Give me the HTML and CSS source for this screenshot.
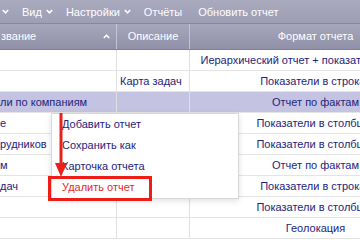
FILE: index.html
```html
<!DOCTYPE html>
<html lang="ru">
<head>
  <meta charset="UTF-8">
  <meta name="viewport" content="width=device-width, initial-scale=1">
  <title>Отчёты</title>
  <link rel="stylesheet" href="styles.css">
</head>
<body>
  <div class="screen">
    <div class="toolbar">
      <span class="tool drop"><svg class="chev" viewBox="0 0 7 5"><path d="M0.8 1 L3.5 3.8 L6.2 1"/></svg></span>
      <span class="tool drop">Вид <svg class="chev" viewBox="0 0 7 5"><path d="M0.8 1 L3.5 3.8 L6.2 1"/></svg></span>
      <span class="tool drop">Настройки <svg class="chev" viewBox="0 0 7 5"><path d="M0.8 1 L3.5 3.8 L6.2 1"/></svg></span>
      <span class="tool">Отчёты</span>
      <span class="tool">Обновить отчет</span>
    </div>

    <div class="grid">
      <div class="row head">
        <div class="cell name">звание <svg class="sort" viewBox="0 0 7 5"><path d="M0.8 4 L3.5 1.2 L6.2 4"/></svg></div>
        <div class="cell">Описание</div>
        <div class="cell fmt">Формат отчета</div>
      </div>
      <div class="row">
        <div class="cell"></div>
        <div class="cell"></div>
        <div class="cell fmt">Иерархический отчет + показатели в строках</div>
      </div>
      <div class="row">
        <div class="cell"></div>
        <div class="cell">Карта задач</div>
        <div class="cell fmt">Показатели в строках</div>
      </div>
      <div class="row sel">
        <div class="cell">ли по компаниям</div>
        <div class="cell"></div>
        <div class="cell fmt">Отчет по фактам</div>
      </div>
      <div class="row">
        <div class="cell">е</div>
        <div class="cell"></div>
        <div class="cell fmt">Показатели в столбцах</div>
      </div>
      <div class="row">
        <div class="cell">рудников</div>
        <div class="cell"></div>
        <div class="cell fmt">Показатели в столбцах</div>
      </div>
      <div class="row">
        <div class="cell">м</div>
        <div class="cell"></div>
        <div class="cell fmt">Отчет по фактам</div>
      </div>
      <div class="row">
        <div class="cell">дач</div>
        <div class="cell"></div>
        <div class="cell fmt">Показатели в строках</div>
      </div>
      <div class="row">
        <div class="cell"></div>
        <div class="cell"></div>
        <div class="cell fmt">Показатели в столбцах</div>
      </div>
      <div class="row">
        <div class="cell"></div>
        <div class="cell"></div>
        <div class="cell fmt">Геолокация</div>
      </div>
    </div>

    <!-- context menu -->
    <div class="menu">
      <div class="menu-item">Добавить отчет</div>
      <div class="menu-item">Сохранить как</div>
      <div class="menu-item">Карточка отчета</div>
      <div class="menu-item danger">Удалить отчет</div>
    </div>

    <!-- annotation -->
    <svg class="arrow" viewBox="0 0 14 66">
      <line x1="7" y1="1" x2="7" y2="53"/>
      <polygon points="1,51 13,51 7,65"/>
    </svg>
    <div class="mark"></div>
  </div>
</body>
</html>
```

FILE: styles.css
```css
body {
  margin: 0;
  font-family: "Liberation Sans", Arial, sans-serif;
  font-size: 11px;
  color: #23237c;
  background: #fff;
  overflow: hidden;
}

.screen {
  position: relative;
  width: 360px;
  height: 240px;
  overflow: hidden;
}

.toolbar {
  display: flex;
  align-items: center;
  gap: 16px;
  height: 24px;
  box-sizing: border-box;
  padding-left: 2px;
  background: linear-gradient(#aaaabf, #9d9db4);
  border-bottom: 1px solid #86869e;
  color: #fff;
  white-space: nowrap;
}

.tool {
  display: flex;
  align-items: center;
  gap: 4px;
}

.tool.drop {
  margin-right: -3px;
}

.chev,
.sort {
  width: 7px;
  height: 5px;
  fill: none;
  stroke: #fff;
  stroke-width: 1.6;
}

.grid {
  width: 442px;
}

.row {
  display: grid;
  grid-template-columns: 117px 73px 252px;
  height: 21px;
  box-sizing: border-box;
  border-bottom: 1px solid #e4e4e4;
}

.cell {
  line-height: 20px;
  padding: 0 3px;
  white-space: nowrap;
  overflow: hidden;
  border-right: 1px solid #e0e0e0;
}

.cell:first-child {
  padding-left: 0;
}

.fmt {
  text-align: center;
}

.head {
  height: 26px;
  background: linear-gradient(#a6a6bc, #9090a8);
  border-bottom-color: #7e7e96;
  color: #fff;
}

.head .cell {
  line-height: 25px;
  text-align: center;
  border-right-color: #c4c4d4;
}

.head .name {
  display: flex;
  align-items: center;
  justify-content: space-between;
  padding: 0 6px 0 1px;
}

.row.sel {
  background: #c4c4e2;
}

.menu {
  position: absolute;
  left: 51px;
  top: 113px;
  width: 188px;
  background: #fff;
  border: 1px solid #d8d8d8;
  box-shadow: 0 2px 6px rgba(0, 0, 0, 0.12);
  box-sizing: border-box;
}

.menu-item {
  height: 21px;
  line-height: 21px;
  padding-left: 10px;
}

.menu-item.danger {
  color: #e8261d;
}

.arrow {
  position: absolute;
  left: 54px;
  top: 112px;
  width: 14px;
  height: 66px;
  stroke: #ea2119;
  fill: #ea2119;
  stroke-width: 3;
}

.arrow polygon {
  stroke: none;
}

.mark {
  position: absolute;
  left: 48px;
  top: 176px;
  width: 104px;
  height: 25px;
  box-sizing: border-box;
  border: 3px solid #ee1d18;
}
```
